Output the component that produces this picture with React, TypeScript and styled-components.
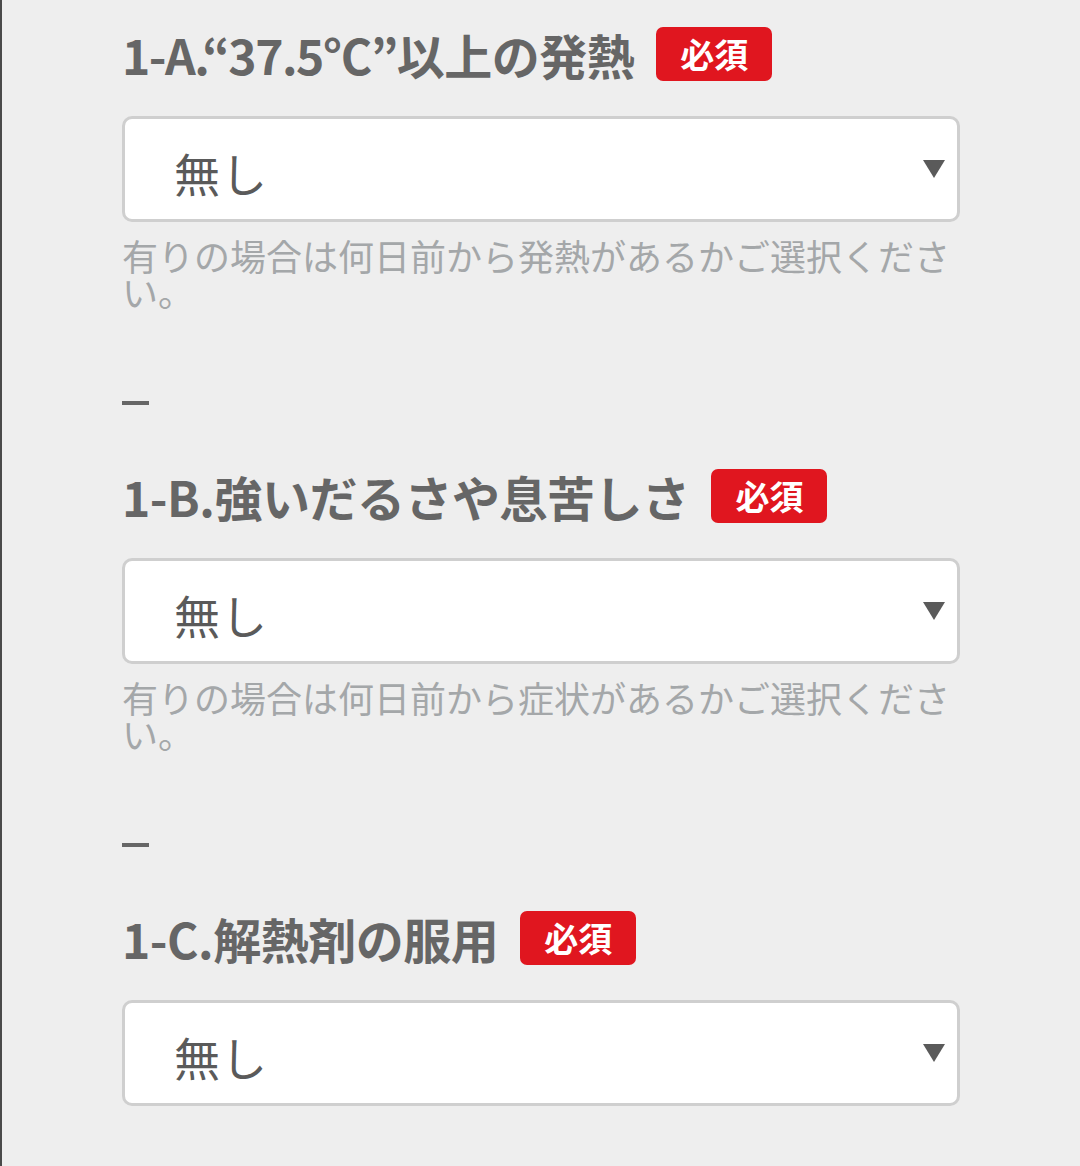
import React from "react";
import styled, { createGlobalStyle } from "styled-components";

const Global = createGlobalStyle`
  html, body { margin: 0; padding: 0; background: #eeeeee; }
  body { font-family: "Noto Sans CJK JP", "Noto Sans", sans-serif; }
`;

const Page = styled.div`
  min-height: 1166px;
  box-sizing: border-box;
  background: #eeeeee;
  border-left: 2px solid #4a4a4a;
  padding: 27px 0 0 120px;
`;

const Form = styled.div`
  width: 838px;
  display: flex;
  flex-direction: column;
`;

const Section = styled.section`
  display: flex;
  flex-direction: column;
`;

const HeadingRow = styled.div`
  display: flex;
  align-items: center;
  gap: 22px;
  height: 54px;
`;

const Heading = styled.h2`
  margin: 0;
  font-size: 48px;
  line-height: 54px;
  font-weight: 700;
  color: #666666;
  letter-spacing: -0.5px;
  white-space: nowrap;
`;

const Latin = styled.span`
  letter-spacing: -1.5px;
`;

const Badge = styled.span`
  display: inline-flex;
  align-items: center;
  justify-content: center;
  width: 116px;
  height: 54px;
  border-radius: 7px;
  background: #e0161f;
  color: #ffffff;
  font-size: 34px;
  font-weight: 700;
  line-height: 1;
`;

const Select = styled.div`
  margin-top: 35px;
  height: 106px;
  box-sizing: border-box;
  border: 3px solid #cfcfcf;
  border-radius: 10px;
  background: #ffffff;
  display: flex;
  align-items: center;
  justify-content: space-between;
  padding: 6px 12px 0 49px;
`;

const Value = styled.span`
  font-size: 46px;
  color: #5a5a5a;
  letter-spacing: 1px;
`;

const Arrow = styled.svg`
  width: 22px;
  height: 18px;
  margin-bottom: 6px;
`;

const Help = styled.p`
  margin: 15px 0 0;
  font-size: 36px;
  line-height: 36px;
  color: #a4a7a9;
  font-weight: 400;
`;

const Divider = styled.div`
  margin-top: 92px;
  width: 27px;
  height: 4px;
  background: #666666;
  margin-bottom: 64px;
`;

type Item = { prefix: string; title: string; help?: string };

const items: Item[] = [
  { prefix: "1-A.“37.5°C”", title: "以上の発熱", help: "有りの場合は何日前から発熱があるかご選択ください。" },
  { prefix: "1-B.", title: "強いだるさや息苦しさ", help: "有りの場合は何日前から症状があるかご選択ください。" },
  { prefix: "1-C.", title: "解熱剤の服用" },
];

export default function App() {
  return (
    <>
      <Global />
      <Page>
        <Form>
          {items.map((it) => (
            <Section key={it.prefix}>
              <HeadingRow>
                <Heading>
                  {it.prefix.length > 4 ? <Latin>{it.prefix}</Latin> : it.prefix}
                  {it.title}
                </Heading>
                <Badge>必須</Badge>
              </HeadingRow>
              <Select>
                <Value>無し</Value>
                <Arrow viewBox="0 0 22 18">
                  <polygon points="0,0 22,0 11,18" fill="#5a5a5a" />
                </Arrow>
              </Select>
              {it.help && (
                <>
                  <Help>{it.help}</Help>
                  <Divider />
                </>
              )}
            </Section>
          ))}
        </Form>
      </Page>
    </>
  );
}
